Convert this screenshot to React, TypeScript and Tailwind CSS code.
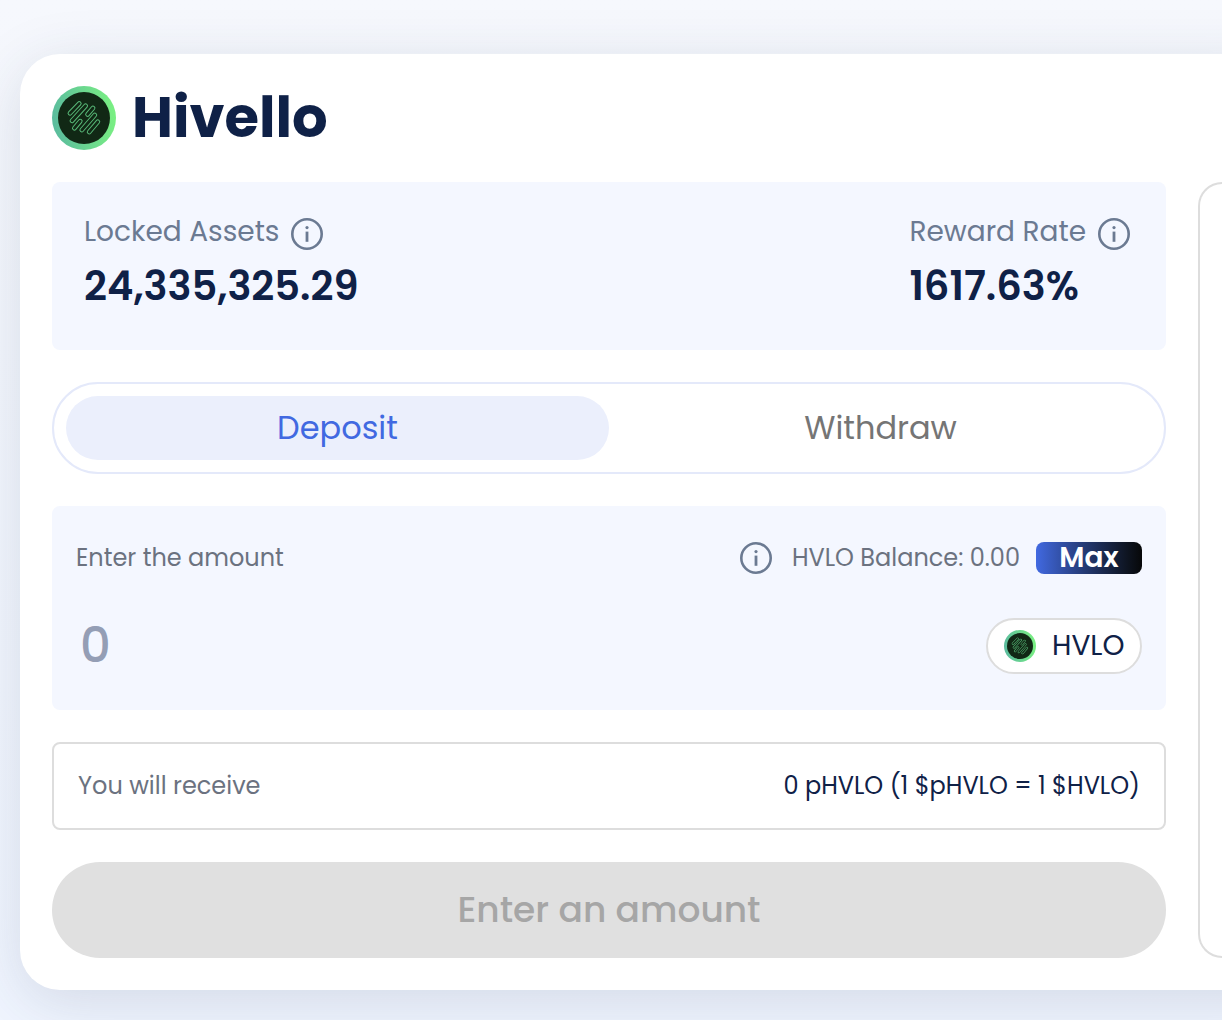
import { useId, useState } from 'react';
import { clsx } from 'clsx';

function InfoIcon() {
  return (
    <svg viewBox="0 0 32 32" fill="none" className="size-8 shrink-0 text-[#6b7a92]" aria-hidden="true">
      <circle cx="16" cy="16" r="14.7" stroke="currentColor" strokeWidth="2.6" />
      <circle cx="16" cy="9.6" r="1.6" fill="currentColor" />
      <path d="M16 13.6V23.8" stroke="currentColor" strokeWidth="2.8" />
    </svg>
  );
}

// Each bar is an outlined capsule: bottom-left centre, then top-right centre
const bars = [
  [18, 27.2, 27.2, 17.6],
  [20, 34.8, 33.6, 19.8],
  [35.6, 28.4, 41, 22],
  [22.4, 42.2, 28.2, 35.2],
  [29.8, 44, 42.8, 29],
  [37.2, 46, 45.8, 35.8],
];

function HivelloLogo({ className }: { className: string }) {
  const id = useId();
  return (
    <svg viewBox="0 0 64 64" fill="none" className={className} aria-hidden="true">
      <defs>
        <linearGradient id={id} x1="0" y1="36" x2="64" y2="28" gradientUnits="userSpaceOnUse">
          <stop stopColor="#5abb9e" />
          <stop offset="1" stopColor="#7af082" />
        </linearGradient>
      </defs>
      <circle cx="32" cy="32" r="32" fill={`url(#${id})`} />
      <circle cx="32" cy="32" r="26" fill="#112815" />
      <g strokeLinecap="round">
        {bars.map(([x1, y1, x2, y2]) => (
          <g key={`${x1}-${y1}`}>
            <path d={`M${x1} ${y1}L${x2} ${y2}`} stroke="#58b878" strokeWidth="4.8" />
            <path d={`M${x1} ${y1}L${x2} ${y2}`} stroke="#112815" strokeWidth="2.8" />
          </g>
        ))}
      </g>
    </svg>
  );
}

function Stat({ label, value }: { label: string; value: string }) {
  return (
    <div className="pr-1">
      <div className="flex h-9 items-center gap-3">
        <span className="text-[28px] leading-9 text-[#6b7a92]">{label}</span>
        <button type="button" aria-label={`About ${label}`} className="pt-1">
          <InfoIcon />
        </button>
      </div>
      <p className="mt-1 text-[40px] leading-[64px] font-semibold">{value}</p>
    </div>
  );
}

const tabs = ['Deposit', 'Withdraw'];

export default function App() {
  const [activeTab, setActiveTab] = useState('Deposit');
  const [amount, setAmount] = useState('');

  return (
    <div className="min-h-screen overflow-hidden bg-linear-to-b from-[#f6f8fd] to-[#f0f5ff] pt-[54px] pb-[30px] pl-5 font-['Poppins','Inter',sans-serif] text-[#0f2147]">
      {/* The card runs past the right edge of the window */}
      <main className="-mr-20 rounded-[40px] bg-white py-8 pr-20 pl-8 shadow-[0_12px_60px_rgba(40,60,90,0.15)]">
        <header className="flex h-16 items-center gap-4">
          <HivelloLogo className="size-16 shrink-0" />
          <h1 className="text-[56px] leading-none font-bold">Hivello</h1>
        </header>

        <div className="mt-8 flex gap-8">
          <div className="flex min-w-0 flex-1 flex-col gap-8">
            <section className="flex h-[168px] justify-between rounded-lg bg-[#f4f7ff] p-8">
              <Stat label="Locked Assets" value="24,335,325.29" />
              <Stat label="Reward Rate" value="1617.63%" />
            </section>

            <div role="tablist" className="flex rounded-full border-2 border-[#e4e9fa] p-3">
              {tabs.map((tab) => (
                <button
                  key={tab}
                  type="button"
                  role="tab"
                  aria-selected={tab === activeTab}
                  onClick={() => setActiveTab(tab)}
                  className={clsx(
                    'h-16 flex-1 rounded-full text-[32px]',
                    tab === activeTab ? 'bg-[#ebeffc] text-[#4169e1]' : 'text-[#757575]'
                  )}
                >
                  {tab}
                </button>
              ))}
            </div>

            <section className="flex h-[204px] flex-col justify-between rounded-lg bg-[#f4f7ff] px-6 py-9">
              <div className="flex h-8 items-center justify-between text-2xl text-[#6b7280]">
                <label htmlFor="amount">Enter the amount</label>
                <div className="flex items-center">
                  <button type="button" aria-label="About balance" className="mr-5">
                    <InfoIcon />
                  </button>
                  <span>HVLO Balance: 0.00</span>
                  <button
                    type="button"
                    className="ml-4 h-8 w-[106px] rounded-lg bg-linear-to-r from-[#4169e1] to-[#070809] text-[28px] leading-8 font-semibold text-white"
                  >
                    Max
                  </button>
                </div>
              </div>
              <div className="flex items-center justify-between">
                <input
                  id="amount"
                  inputMode="decimal"
                  placeholder="0"
                  value={amount}
                  onChange={(e) => setAmount(e.target.value)}
                  className="h-14 min-w-0 flex-1 bg-transparent px-1 text-5xl font-medium outline-none placeholder:text-[#949eb5]"
                />
                <div className="flex h-14 w-[156px] shrink-0 items-center gap-4 rounded-full border-2 border-[#dddddd] bg-white pl-4">
                  <HivelloLogo className="size-8 shrink-0" />
                  <span className="text-[28px]">HVLO</span>
                </div>
              </div>
            </section>

            <section className="flex h-[88px] items-center justify-between rounded-lg border-2 border-[#dddddd] px-6 text-2xl">
              <span className="text-[#6b7280]">You will receive</span>
              <span>0 pHVLO (1 $pHVLO = 1 $HVLO)</span>
            </section>

            <button type="button" disabled className="h-24 rounded-full bg-[#e0e0e0] text-4xl font-medium text-[#a6a6a6]">
              Enter an amount
            </button>
          </div>

          {/* Side panel */}
          <aside className="w-6 shrink-0 rounded-l-3xl border-2 border-r-0 border-[#dddddd]" />
        </div>
      </main>
    </div>
  );
}
